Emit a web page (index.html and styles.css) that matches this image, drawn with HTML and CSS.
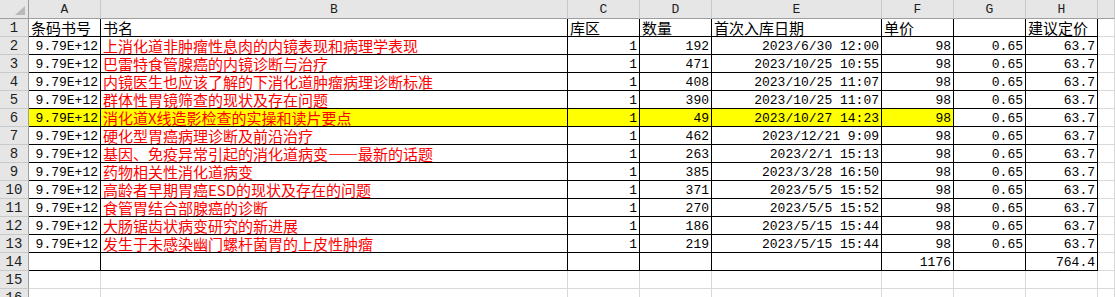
FILE: index.html
```html
<!DOCTYPE html>
<html lang="zh-CN">
<head>
<meta charset="utf-8">
<title>Sheet</title>
<link rel="stylesheet" href="styles.css">
</head>
<body>
<div class="sheet">
  <div class="corner"><svg width="28" height="18" viewBox="0 0 28 18"><polygon points="25,6 25,15 15,15" fill="#b9b9b9"/></svg></div>
  <div class="ch">A</div><div class="ch">B</div><div class="ch">C</div><div class="ch">D</div><div class="ch">E</div><div class="ch">F</div><div class="ch">G</div><div class="ch">H</div><div class="ch last"></div>

  <div class="rh">1</div>
  <div class="c b t">条码书号</div><div class="c b t">书名</div><div class="c b t">库区</div><div class="c b t">数量</div><div class="c b t">首次入库日期</div><div class="c b t">单价</div><div class="c b t"></div><div class="c b t">建议定价</div><div class="c"></div>

  <div class="rh">2</div>
  <div class="c b n">9.79E+12</div><div class="c b t red">上消化道非肿瘤性息肉的内镜表现和病理学表现</div><div class="c b n">1</div><div class="c b n">192</div><div class="c b n">2023/6/30 12:00</div><div class="c b n">98</div><div class="c b n">0.65</div><div class="c b n">63.7</div><div class="c"></div>

  <div class="rh">3</div>
  <div class="c b n">9.79E+12</div><div class="c b t red">巴雷特食管腺癌的内镜诊断与治疗</div><div class="c b n">1</div><div class="c b n">471</div><div class="c b n">2023/10/25 10:55</div><div class="c b n">98</div><div class="c b n">0.65</div><div class="c b n">63.7</div><div class="c"></div>

  <div class="rh">4</div>
  <div class="c b n">9.79E+12</div><div class="c b t red">内镜医生也应该了解的下消化道肿瘤病理诊断标准</div><div class="c b n">1</div><div class="c b n">408</div><div class="c b n">2023/10/25 11:07</div><div class="c b n">98</div><div class="c b n">0.65</div><div class="c b n">63.7</div><div class="c"></div>

  <div class="rh">5</div>
  <div class="c b n">9.79E+12</div><div class="c b t red">群体性胃镜筛查的现状及存在问题</div><div class="c b n">1</div><div class="c b n">390</div><div class="c b n">2023/10/25 11:07</div><div class="c b n">98</div><div class="c b n">0.65</div><div class="c b n">63.7</div><div class="c"></div>

  <div class="rh">6</div>
  <div class="c b n y">9.79E+12</div><div class="c b t red y">消化道X线造影检查的实操和读片要点</div><div class="c b n y">1</div><div class="c b n y">49</div><div class="c b n y">2023/10/27 14:23</div><div class="c b n y">98</div><div class="c b n">0.65</div><div class="c b n">63.7</div><div class="c"></div>

  <div class="rh">7</div>
  <div class="c b n">9.79E+12</div><div class="c b t red">硬化型胃癌病理诊断及前沿治疗</div><div class="c b n">1</div><div class="c b n">462</div><div class="c b n">2023/12/21 9:09</div><div class="c b n">98</div><div class="c b n">0.65</div><div class="c b n">63.7</div><div class="c"></div>

  <div class="rh">8</div>
  <div class="c b n">9.79E+12</div><div class="c b t red">基因、免疫异常引起的消化道病变——最新的话题</div><div class="c b n">1</div><div class="c b n">263</div><div class="c b n">2023/2/1 15:13</div><div class="c b n">98</div><div class="c b n">0.65</div><div class="c b n">63.7</div><div class="c"></div>

  <div class="rh">9</div>
  <div class="c b n">9.79E+12</div><div class="c b t red">药物相关性消化道病变</div><div class="c b n">1</div><div class="c b n">385</div><div class="c b n">2023/3/28 16:50</div><div class="c b n">98</div><div class="c b n">0.65</div><div class="c b n">63.7</div><div class="c"></div>

  <div class="rh">10</div>
  <div class="c b n">9.79E+12</div><div class="c b t red">高龄者早期胃癌ESD的现状及存在的问题</div><div class="c b n">1</div><div class="c b n">371</div><div class="c b n">2023/5/5 15:52</div><div class="c b n">98</div><div class="c b n">0.65</div><div class="c b n">63.7</div><div class="c"></div>

  <div class="rh">11</div>
  <div class="c b n">9.79E+12</div><div class="c b t red">食管胃结合部腺癌的诊断</div><div class="c b n">1</div><div class="c b n">270</div><div class="c b n">2023/5/5 15:52</div><div class="c b n">98</div><div class="c b n">0.65</div><div class="c b n">63.7</div><div class="c"></div>

  <div class="rh">12</div>
  <div class="c b n">9.79E+12</div><div class="c b t red">大肠锯齿状病变研究的新进展</div><div class="c b n">1</div><div class="c b n">186</div><div class="c b n">2023/5/15 15:44</div><div class="c b n">98</div><div class="c b n">0.65</div><div class="c b n">63.7</div><div class="c"></div>

  <div class="rh">13</div>
  <div class="c b n">9.79E+12</div><div class="c b t red">发生于未感染幽门螺杆菌胃的上皮性肿瘤</div><div class="c b n">1</div><div class="c b n">219</div><div class="c b n">2023/5/15 15:44</div><div class="c b n">98</div><div class="c b n">0.65</div><div class="c b n">63.7</div><div class="c"></div>

  <div class="rh">14</div>
  <div class="c b n"></div><div class="c b t"></div><div class="c b n"></div><div class="c b n"></div><div class="c b n"></div><div class="c b n">1176</div><div class="c b n"></div><div class="c b n">764.4</div><div class="c"></div>

  <div class="rh">15</div>
  <div class="c"></div><div class="c"></div><div class="c"></div><div class="c"></div><div class="c"></div><div class="c"></div><div class="c"></div><div class="c"></div><div class="c"></div>

  <div class="rh">16</div>
  <div class="c"></div><div class="c"></div><div class="c"></div><div class="c"></div><div class="c"></div><div class="c"></div><div class="c"></div><div class="c"></div><div class="c"></div>
</div>
</body>
</html>
```

FILE: styles.css
```css
html, body {
  margin: 0;
  padding: 0;
  overflow: hidden;
  background: #ffffff;
}

.sheet {
  display: grid;
  grid-template-columns: 29px 72px 467px 72px 72px 170px 72px 72px 72px 1fr;
  grid-template-rows: 19px repeat(16, 18px);
  width: 1115px;
  height: 297px;
  overflow: hidden;
}

.sheet > div {
  box-sizing: border-box;
  white-space: nowrap;
  min-height: 0;
}

.corner {
  background: #e6e6e6;
  border-right: 1px solid #9e9e9e;
  border-bottom: 1px solid #9e9e9e;
}

.corner svg {
  display: block;
}

.ch {
  background: #e6e6e6;
  border-right: 1px solid #c9c9c9;
  border-bottom: 1px solid #9e9e9e;
  text-align: center;
  font-family: "Liberation Mono", monospace;
  font-size: 13px;
  line-height: 16px;
  padding-top: 2px;
  color: #1e1e1e;
}

.rh {
  background: #e6e6e6;
  border-right: 1px solid #9e9e9e;
  border-bottom: 1px solid #c9c9c9;
  text-align: center;
  font-family: "Liberation Mono", monospace;
  font-size: 14px;
  line-height: 16px;
  padding-top: 1px;
  color: #1e1e1e;
}

.c {
  border-right: 1px solid #d9d9d9;
  border-bottom: 1px solid #d9d9d9;
  background: #ffffff;
  color: #000000;
}

.c.b {
  border-right-color: #000000;
  border-bottom-color: #000000;
}

.t {
  font-family: "Noto Sans CJK SC", "Noto Sans", sans-serif;
  font-size: 15px;
  line-height: 16px;
  padding: 1px 2px 0 2px;
  text-align: left;
}

.n {
  font-family: "Liberation Mono", monospace;
  font-size: 13px;
  line-height: 14px;
  padding: 3px 2px 0 0;
  text-align: right;
}

.red {
  color: #ff0000;
}

.c.y {
  background: #ffff00;
}
```
